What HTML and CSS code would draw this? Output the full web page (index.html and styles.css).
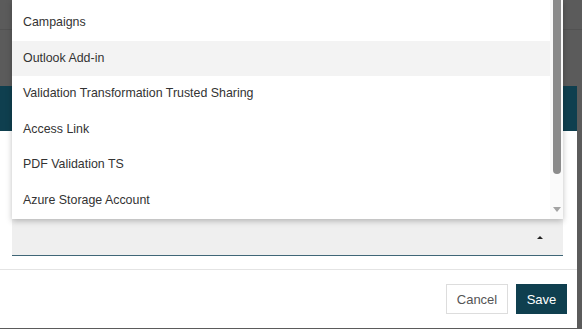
FILE: index.html
```html
<!DOCTYPE html>
<html>
<head>
  <title>Edit Integration</title>
  <link rel="stylesheet" href="styles.css">
</head>
<body>
  <div class="page-bar"></div>

  <div class="modal">
    <div class="modal-header"></div>
    <div class="modal-body">
      <div class="select-field">
        <span class="caret-up"></span>
      </div>
    </div>
    <div class="modal-footer">
      <button class="btn btn-cancel">Cancel</button>
      <button class="btn btn-save">Save</button>
    </div>
  </div>

  <div class="dropdown-menu">
    <ul class="menu-list">
      <li class="menu-item">Campaigns</li>
      <li class="menu-item active">Outlook Add-in</li>
      <li class="menu-item">Validation Transformation Trusted Sharing</li>
      <li class="menu-item">Access Link</li>
      <li class="menu-item">PDF Validation TS</li>
      <li class="menu-item">Azure Storage Account</li>
    </ul>
    <div class="menu-scrollbar">
      <div class="scroll-thumb"></div>
      <div class="scroll-down"></div>
    </div>
  </div>
</body>
</html>
```

FILE: styles.css
```css
body {
  margin: 0;
  background: #5b5b5b;
  font-family: "Liberation Sans", Arial, sans-serif;
  font-size: 13px;
  color: #333;
  overflow: hidden;
  height: 329px;
}

.page-bar {
  height: 29px;
  border-bottom: 1px solid #525252;
  margin-bottom: 56px;
}

.modal {
  width: 577px;
  height: 242px;
  background: #fff;
  display: flex;
  flex-direction: column;
}

.modal-header {
  height: 45px;
  background: #0f3f4f;
}

.modal-body {
  padding: 88px 14px 0 12px;
}

.select-field {
  height: 36px;
  background: #efefef;
  border-bottom: 1px solid #3f6677;
  display: flex;
  justify-content: flex-end;
  align-items: center;
  padding-right: 20px;
}

.caret-up {
  width: 0;
  height: 0;
  border-left: 3px solid transparent;
  border-right: 3px solid transparent;
  border-bottom: 3px solid #222;
}

.modal-footer {
  margin-top: 13px;
  border-top: 1px solid #e4e4e4;
  display: flex;
  justify-content: flex-end;
  align-items: center;
  gap: 8px;
  padding: 14px 10px 0 0;
}

.btn {
  height: 30px;
  font-family: "Liberation Sans", Arial, sans-serif;
  font-size: 13px;
  border: 1px solid #ddd;
  cursor: pointer;
}

.btn-cancel {
  width: 62px;
  background: #fff;
  color: #555;
}

.btn-save {
  width: 51px;
  background: #0f3f4f;
  border-color: #0f3f4f;
  color: #fff;
}

/* open dropdown, lies over the modal */
.dropdown-menu {
  position: absolute;
  left: 12px;
  top: 0;
  width: 551px;
  height: 219px;
  background: #fff;
  box-shadow: 0 2px 6px rgba(0, 0, 0, 0.25);
  display: flex;
  overflow: hidden;
}

.menu-list {
  list-style: none;
  margin: 0;
  padding: 5px 0 0 0;
  flex-grow: 1;
  font-size: 12.4px;
}

.menu-item {
  height: 35.6px;
  line-height: 35.6px;
  padding-left: 11px;
}

.menu-item.active {
  background: #f3f3f3;
}

.menu-scrollbar {
  width: 13px;
  background: #fafafa;
  position: relative;
}

.scroll-thumb {
  position: absolute;
  left: 3px;
  top: -6px;
  width: 8px;
  height: 180px;
  border-radius: 4px;
  background: #8b8b8b;
}

.scroll-down {
  position: absolute;
  left: 3px;
  top: 207px;
  width: 0;
  height: 0;
  border-left: 4px solid transparent;
  border-right: 4px solid transparent;
  border-top: 5px solid #a3a3a3;
}
```
